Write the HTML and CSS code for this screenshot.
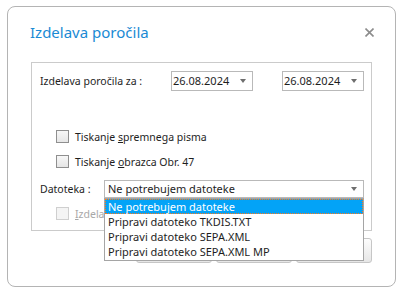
FILE: index.html
```html
<!DOCTYPE html>
<html lang="sl">
<head>
    <meta charset="UTF-8">
    <meta name="viewport" content="width=device-width, initial-scale=1.0">
    <title>Izdelava poročila</title>
    <link rel="stylesheet" href="styles.css">
</head>
<body>
    <div class="dialog">
        <div class="dialog-head">
            <h1>Izdelava poročila</h1>
            <svg class="close" width="9" height="9" viewBox="0 0 9 9">
                <path d="M0.5 0.5 L8.5 8.5 M8.5 0.5 L0.5 8.5" stroke="#8c8c8c" stroke-width="1.6" fill="none"/>
            </svg>
        </div>
        <div class="group">
            <div class="row">
                <label class="lbl-wide">Izdelava poročila za :</label>
                <div class="date">26.08.2024<span class="arrow"></span></div>
                <div class="date date-second">26.08.2024<span class="arrow"></span></div>
            </div>
            <div class="checks">
                <div class="check"><span class="box"></span><span>Tiskanje <u>s</u>premnega pisma</span></div>
                <div class="check"><span class="box"></span><span>Tiskanje <u>o</u>brazca Obr. 47</span></div>
            </div>
            <div class="row row-file">
                <label class="lbl-short">Datoteka :</label>
                <div class="combo">
                    Ne potrebujem datoteke<span class="arrow"></span>
                    <ul class="list">
                        <li class="selected">Ne potrebujem datoteke</li>
                        <li>Pripravi datoteko TKDIS.TXT</li>
                        <li>Pripravi datoteko SEPA.XML</li>
                        <li>Pripravi datoteko SEPA.XML MP</li>
                    </ul>
                </div>
            </div>
            <div class="check check-off"><span class="box"></span><span><u>I</u>zdelava datoteke za banko</span></div>
        </div>
        <div class="buttons">
            <button>Natisni</button>
            <button>Predogled</button>
            <button>Zapri</button>
        </div>
    </div>
</body>
</html>
```

FILE: styles.css
```css
body {
    margin: 0;
    background-color: #fff;
    font-family: "Noto Sans", "Liberation Sans", sans-serif;
    font-size: 10.5px;
    color: #1e1e1e;
}
.dialog {
    margin: 6px 0 0 7px;
    width: 387px;
    height: 279px;
    border: 1px solid #b4b4b4;
    border-radius: 8px;
}
.dialog-head {
    display: flex;
    justify-content: space-between;
    align-items: center;
    padding: 15px 21px 0 22px;
    height: 20px;
    margin-bottom: 20px;
}
h1 {
    margin: 0;
    font-size: 15px;
    font-weight: normal;
    line-height: 20px;
    color: #1a8ad4;
}
.close {
    display: block;
}
.group {
    margin: 0 23px;
    border: 1px solid #cbcbcb;
    padding: 8px 7px 10px 8px;
}
.row {
    display: flex;
    align-items: center;
}
.lbl-wide {
    width: 131px;
}
.lbl-short {
    width: 64px;
}
.date, .combo {
    position: relative;
    box-sizing: border-box;
    height: 20px;
    line-height: 18px;
    padding-left: 1px;
    border: 1px solid #b9b9b9;
    font-size: 11px;
}
.date {
    width: 82px;
}
.date-second {
    margin-left: 29px;
}
.arrow {
    position: absolute;
    right: 6px;
    top: 7px;
    width: 0;
    height: 0;
    border-left: 3.5px solid transparent;
    border-right: 3.5px solid transparent;
    border-top: 4px solid #6e6e6e;
}
.checks {
    display: flex;
    flex-direction: column;
    gap: 12px;
    margin-top: 39px;
}
.check {
    display: flex;
    align-items: center;
    gap: 6px;
    height: 13px;
    margin-left: 16px;
}
.check u {
    text-decoration-thickness: 1px;
}
.box {
    box-sizing: border-box;
    width: 13px;
    height: 13px;
    border: 1px solid #8f8f8f;
    background: linear-gradient(#f7f7f7, #e6e6e6);
}
.row-file {
    margin-top: 12px;
}
.combo {
    width: 260px;
    height: 18px;
    line-height: 16px;
    padding-left: 3px;
}
.combo .arrow {
    top: 6px;
}
.list {
    position: absolute;
    top: 17px;
    left: -1px;
    width: 260px;
    box-sizing: border-box;
    margin: 0;
    padding: 0 0 1px;
    list-style: none;
    background-color: #fff;
    border: 1px solid #a5a5a5;
    z-index: 2;
}
.list li {
    height: 15px;
    line-height: 15px;
    padding-left: 3px;
}
.list li.selected {
    box-sizing: border-box;
    background-color: #03a3f7;
    color: #fff;
    border: 1px dotted #ff7a1a;
    padding-left: 2px;
    line-height: 13px;
}
.check-off {
    margin-top: 9px;
    color: #a8a8a8;
}
.check-off .box {
    border-color: #cfcfcf;
    background: #f4f4f4;
}
.buttons {
    display: flex;
    justify-content: flex-end;
    gap: 4px;
    margin: 7px 23px 0;
}
button {
    width: 76px;
    height: 25px;
    border: 1px solid #c6c6c6;
    border-radius: 3px;
    background: linear-gradient(#fdfdfd, #e6e6e6);
    font-family: inherit;
    font-size: 11px;
    color: #1e1e1e;
}
```
